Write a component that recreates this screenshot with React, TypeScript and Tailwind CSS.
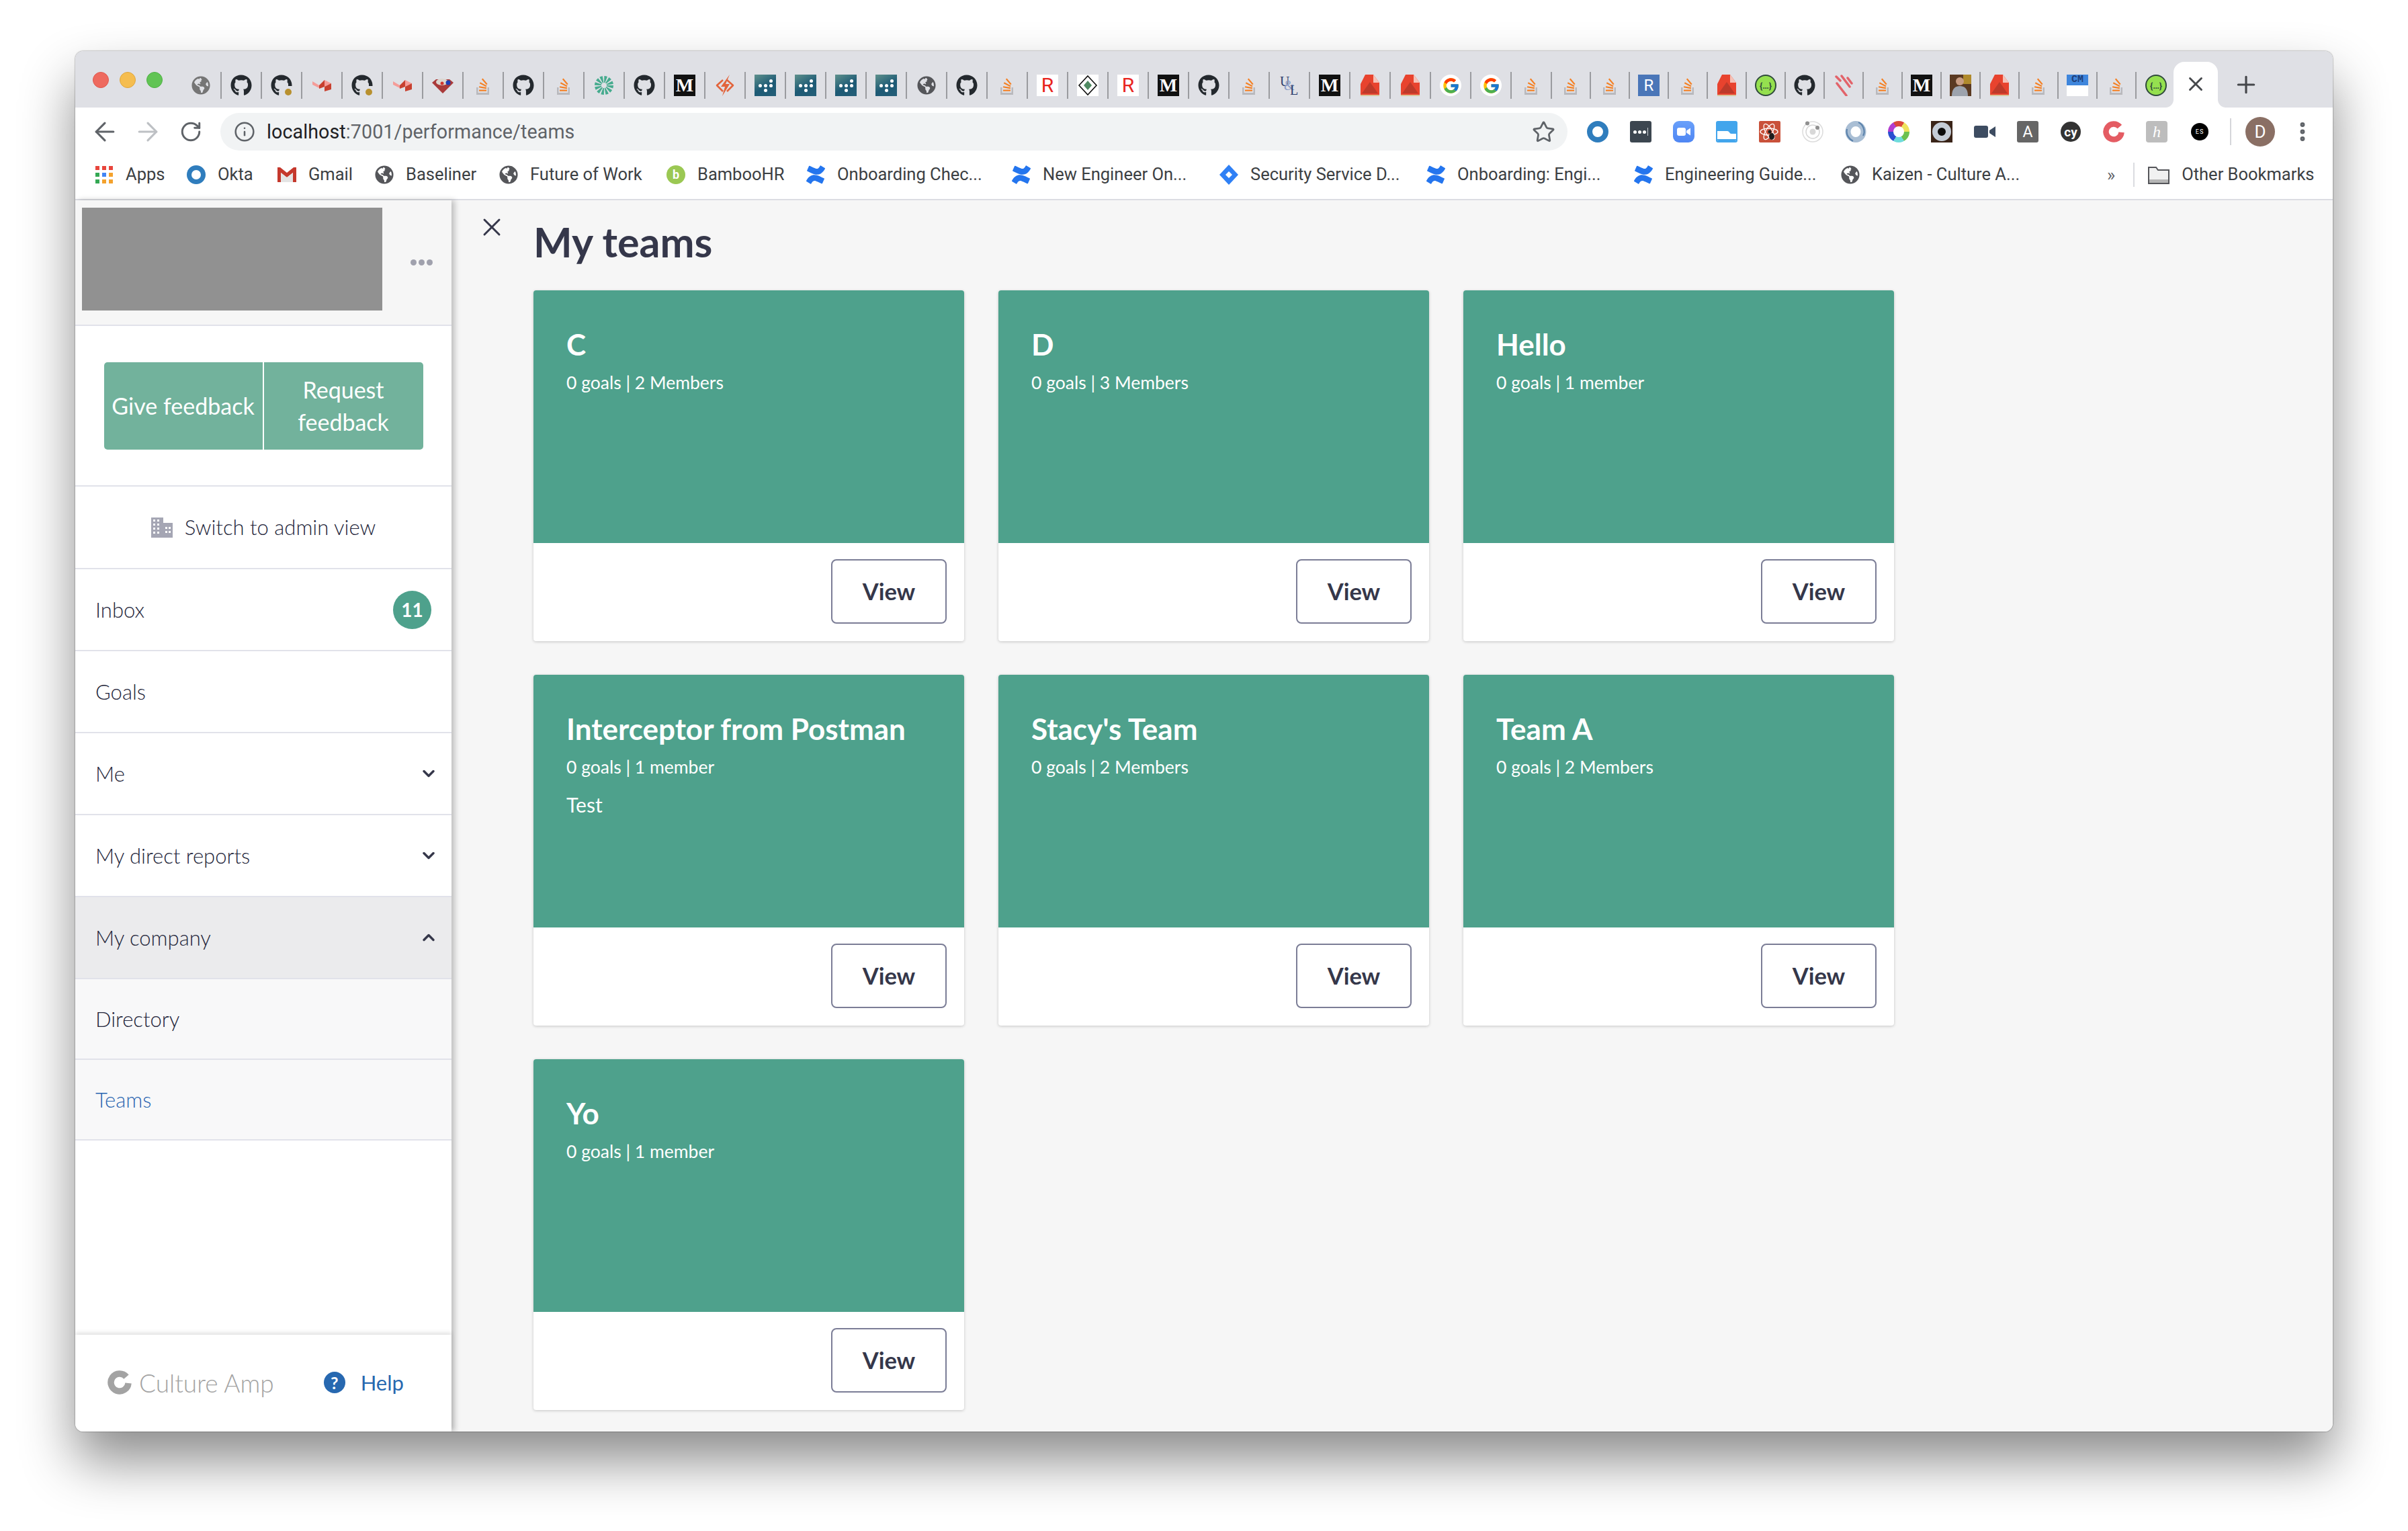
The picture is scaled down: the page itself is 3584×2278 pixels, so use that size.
import React from 'react';
import { ArrowLeft, ArrowRight, RotateCw, Info, Star, Plus, X, ChevronDown, ChevronUp, MoreVertical } from 'lucide-react';
import { FaGithub, FaGlobeAmericas } from 'react-icons/fa';
import { FcGoogle } from 'react-icons/fc';
import { SiConfluence } from 'react-icons/si';

const Globe = ({ color = '#757575', size = 28 }: { color?: string; size?: number }) => <FaGlobeAmericas size={size} color={color} />;

const Octo = ({ dot = false }: { dot?: boolean }) => (
  <span className="relative flex h-8 w-8 items-center justify-center">
    <FaGithub size={32} color="#24292e" />
    {dot && <span className="absolute bottom-0 right-0 h-[15px] w-[13px] bg-[#dfe0e5]" />}
    {dot && <span className="absolute bottom-[1px] right-[1px] h-[10px] w-[10px] rounded-full bg-[#b8902f]" />}
  </span>
);

const StackO = () => (
  <svg width="22" height="28" viewBox="0 0 22 28">
    <path d="M1 17h2.5v8h14v-8H20v11H1z" fill="#b9b9bd" />
    <g fill="#f48024">
      <rect x="5" y="20.5" width="11" height="2.2" />
      <rect x="5" y="16" width="11" height="2.2" transform="rotate(10 10 17)" />
      <rect x="6" y="11.5" width="11" height="2.2" transform="rotate(28 11 12)" />
      <rect x="8" y="7" width="11" height="2.2" transform="rotate(50 13 8)" />
    </g>
  </svg>
);

const RedCubes = () => (
  <svg width="28" height="18" viewBox="0 0 28 18">
    <path d="M0 3l10 6v4L0 8z" fill="#f59c98" />
    <path d="M10 9l8-8v10l-8 3z" fill="#c8402f" />
    <path d="M18 1l10 5-10 5z" fill="#f59c98" />
    <path d="M28 6v9l-10 3v-7z" fill="#c8402f" />
  </svg>
);

const Gem = () => (
  <svg width="32" height="24" viewBox="0 0 32 24">
    <path d="M0 8l6-5h20l6 5-16 16z" fill="#a93a3a" />
    <ellipse cx="15" cy="7" rx="9" ry="5" fill="#dcd6cf" />
    <circle cx="24" cy="8" r="3.5" fill="#1f3fb5" />
    <circle cx="15" cy="9" r="2.5" fill="#d0352c" />
  </svg>
);

const Medium = () => (
  <span className="flex h-8 w-8 items-center justify-center bg-[#111] font-['Liberation_Serif',serif] text-[28px] font-bold leading-none text-white">M</span>
);

const Burst = () => (
  <svg width="28" height="28" viewBox="0 0 28 28" fill="none">
    <circle cx="14" cy="14" r="9" stroke="#46ab8e" strokeWidth="10" strokeDasharray="3 1.71" />
  </svg>
);

const Zap = () => (
  <svg width="30" height="32" viewBox="0 0 30 32" fill="none">
    <path d="M12 8l-9 8 9 9M18 8l9 8-9 9" stroke="#e2643c" strokeWidth="2.6" strokeLinejoin="round" />
    <path d="M22 0L9 18h6l-4 14 11-18h-6z" fill="#e2643c" />
  </svg>
);

const Dots = () => (
  <span className="grid h-8 w-8 grid-cols-3 content-center justify-items-center gap-y-[2px] bg-[linear-gradient(150deg,#5f918c,#1d5a75_55%,#255f78)] px-[4px]">
    <i /><i /><i className="h-[5px] w-[5px] rounded-full bg-white" />
    <i className="h-[5px] w-[5px] rounded-full bg-white" /><i className="h-[5px] w-[5px] rounded-full bg-white" /><i className="h-[5px] w-[5px] rounded-full bg-white" />
    <i /><i className="h-[5px] w-[5px] rounded-full bg-white" /><i />
  </span>
);

const LetterR = () => (
  <span className="flex h-8 w-8 items-center justify-center bg-white font-['Roboto',sans-serif] text-[30px] leading-none text-[#e8251f]">R</span>
);

const Rhomb = () => (
  <svg width="32" height="32" viewBox="0 0 32 32">
    <rect width="32" height="32" fill="#fff" />
    <path d="M16 2l13 14-13 14L3 16z" fill="#fff" stroke="#111" strokeWidth="1.6" />
    <path d="M16 9l6 7-6 7-6-7z" fill="#4f8a62" />
  </svg>
);

const UL = () => (
  <span className="relative h-8 w-8 font-['Liberation_Serif',serif] text-[20px] leading-none text-[#2c3e6b]">
    <span className="absolute left-[2px] top-0">U</span>
    <span className="absolute left-[8px] top-[6px] text-[#8b9cc8]">&amp;</span>
    <span className="absolute left-[17px] top-[13px]">L</span>
  </span>
);

const RedDoc = () => (
  <svg width="30" height="32" viewBox="0 0 30 32">
    <path d="M8 0h12l9 12v18H1V14z" fill="#e8432e" />
    <path d="M20 0l9 12h-9z" fill="#f6c1b6" />
    <path d="M3 28l12-17 12 17z" fill="#bd3a2a" />
    <rect x="1" y="30" width="28" height="2" fill="#d9c49a" />
  </svg>
);

const GoogleG = () => (
  <span className="flex h-8 w-8 items-center justify-center rounded-full bg-white"><FcGoogle size={27} /></span>
);

const BlueR = () => (
  <span className="flex h-8 w-8 items-center justify-center bg-[#4a76b8] font-['Roboto',sans-serif] text-[24px] leading-none text-white">R</span>
);

const Swagger = () => (
  <span className="flex h-8 w-8 items-center justify-center rounded-full border-2 border-[#2f4a3c] bg-[#95e04f] font-['Roboto',sans-serif] text-[13px] font-bold leading-none text-[#2f4a3c]">{'{…}'}</span>
);

const Stripes = () => (
  <svg width="28" height="32" viewBox="0 0 28 32" stroke="#e2636a" strokeWidth="3.5" strokeLinecap="round">
    <path d="M3 3l6 6M11 2l12 16M4 13l14 18M20 5l6 8" />
  </svg>
);

const Photo = () => (
  <svg width="32" height="32" viewBox="0 0 32 32">
    <rect width="32" height="32" fill="#5b3a22" />
    <rect x="20" width="12" height="14" fill="#b08a2c" />
    <circle cx="15" cy="10" r="6" fill="#c99d83" />
    <path d="M3 32c0-12 6-15 12-15s12 3 12 15z" fill="#9da3ad" />
  </svg>
);

const CM = () => (
  <span className="flex h-8 w-8 flex-col bg-white">
    <span className="h-[16px] bg-[#3f86dc] text-center font-['Liberation_Mono',monospace] text-[15px] font-bold leading-[16px] text-[#1f3f7a]">CM</span>
  </span>
);

// brush ring shared by the Culture Amp logo and its extension icon
const BrushRing = ({ color, size }: { color: string; size: number }) => (
  <svg width={size} height={size} viewBox="0 0 36 36" fill="none">
    <path d="M28 9.6A13 13 0 1 0 31 19" stroke={color} strokeWidth="9.5" />
    <path d="M33 21c-2 6-6 9-11 10M33 24c-2 4-4 6-8 8" stroke={color} strokeWidth="1" />
  </svg>
);

// favicons in tab order, left to right
const tabs: React.ReactNode[] = [
  <Globe />, <Octo />, <Octo dot />, <RedCubes />, <Octo dot />, <RedCubes />, <Gem />, <StackO />, <Octo />, <StackO />,
  <Burst />, <Octo />, <Medium />, <Zap />, <Dots />, <Dots />, <Dots />, <Dots />, <Globe color="#55565a" />, <Octo />,
  <StackO />, <LetterR />, <Rhomb />, <LetterR />, <Medium />, <Octo />, <StackO />, <UL />, <Medium />, <RedDoc />,
  <RedDoc />, <GoogleG />, <GoogleG />, <StackO />, <StackO />, <StackO />, <BlueR />, <StackO />, <RedDoc />, <Swagger />,
  <Octo />, <Stripes />, <StackO />, <Medium />, <Photo />, <RedDoc />, <StackO />, <CM />, <StackO />, <Swagger />,
];

const TabBar = () => (
  <div className="flex h-[84px] bg-[#dfe0e5]">
    <div className="ml-[26px] mt-[31px] flex h-6 w-[132px] gap-4">
      <span className="h-6 w-6 rounded-full border border-[#e0584f] bg-[#ee6a5f]" />
      <span className="h-6 w-6 rounded-full border border-[#dfa63c] bg-[#f5bd4f]" />
      <span className="h-6 w-6 rounded-full border border-[#4eb044] bg-[#61c454]" />
    </div>
    <div className="mt-[31px] flex h-10">
      {tabs.map((icon, i) => (
        <div
          key={i}
          className={`flex h-10 shrink-0 items-center justify-center ${i < 34 ? 'w-[60px]' : 'w-[58px]'} ${i < 49 ? 'border-r-2 border-[#9a9b9f]' : ''}`}
        >
          {icon}
        </div>
      ))}
    </div>
    <div className="relative ml-[-3px] mt-4 flex h-[68px] w-[66px] items-start justify-center rounded-t-[16px] bg-white pt-4">
      <span className="absolute bottom-0 left-[-12px] h-3 w-3 bg-[radial-gradient(circle_at_0_0,transparent_11.5px,#ffffff_12.5px)]" />
      <span className="absolute bottom-0 right-[-12px] h-3 w-3 bg-[radial-gradient(circle_at_100%_0,transparent_11.5px,#ffffff_12.5px)]" />
      <X size={34} color="#45474b" strokeWidth={2} />
    </div>
    <div className="ml-[22px] mt-[30px]">
      <Plus size={40} color="#45474b" strokeWidth={1.9} />
    </div>
  </div>
);

// toolbar extension icons
const extensions: React.ReactNode[] = [
  <span className="h-8 w-8 rounded-full border-[8px] border-[#2f7dbd]" />,
  <span className="flex h-8 w-8 items-center justify-center gap-[2px] rounded-[3px] bg-[#3c4650]">
    <i className="h-[5px] w-[5px] rounded-full bg-white" />
    <i className="h-[5px] w-[5px] rounded-full bg-white" />
    <i className="h-[5px] w-[5px] rounded-full bg-white" />
    <i className="h-[12px] w-[1px] bg-[#c8cdd2]" />
  </span>,
  <span className="flex h-8 w-8 items-center justify-center rounded-[9px] bg-[linear-gradient(#69a0fa,#4f86f3)]">
    <svg width="20" height="12" viewBox="0 0 20 12" fill="#fff"><rect width="13" height="12" rx="3" /><path d="M14 4.5l6-4v11l-6-4z" /></svg>
  </span>,
  <svg width="32" height="32" viewBox="0 0 32 32"><rect width="32" height="32" rx="3" fill="#42a5ec" /><path d="M2 15h15c3 0 3 4 6 4h7v9a2 2 0 01-2 2H4a2 2 0 01-2-2z" fill="#fff" /><path d="M2 27h28v1a2 2 0 01-2 2H4a2 2 0 01-2-2z" fill="#42a5ec" /></svg>,
  <svg width="32" height="32" viewBox="0 0 32 32" fill="none"><rect width="32" height="32" rx="2" fill="#c9513a" /><g stroke="#fff" strokeWidth="1.3"><ellipse cx="15" cy="16" rx="13" ry="5" /><ellipse cx="15" cy="16" rx="13" ry="5" transform="rotate(60 15 16)" /><ellipse cx="15" cy="16" rx="13" ry="5" transform="rotate(120 15 16)" /></g><circle cx="16" cy="16" r="2.5" fill="#1d1d1d" /><ellipse cx="19" cy="23" rx="4" ry="5" fill="#1d1d1d" /></svg>,
  <svg width="32" height="32" viewBox="0 0 32 32" fill="none"><circle cx="16" cy="16" r="15" stroke="#dcdcdc" strokeWidth="1.5" /><circle cx="16" cy="16" r="10" stroke="#d6d6d6" strokeWidth="1.5" /><circle cx="16" cy="16" r="4.5" fill="#d8d8d8" /><circle cx="8" cy="3.5" r="3" fill="#8f8f8f" /><circle cx="23" cy="10" r="3" fill="#8f8f8f" /></svg>,
  <svg width="32" height="32" viewBox="0 0 32 32" fill="none"><ellipse cx="16" cy="16" rx="11.5" ry="12" stroke="#a9bed4" strokeWidth="8" /><path d="M20 2c7 3 11 13 7 20M12 30C6 27 1 20 3 12" stroke="#5d84ad" strokeWidth="2.2" /></svg>,
  <span className="h-8 w-8 rounded-full bg-[conic-gradient(from_-30deg,#d9483b_0_60deg,#efe25d_60deg_120deg,#6cc04f_120deg_180deg,#6fdcdc_180deg_240deg,#2a4fd0_240deg_300deg,#b23ccf_300deg_360deg)] p-2"><span className="block h-full w-full rounded-full bg-white" /></span>,
  <span className="flex h-8 w-8 items-center justify-center bg-[#3a2418]"><span className="h-[28px] w-[28px] rounded-full border-[8px] border-[#c4ccd6] bg-[#0c0c0c]" /></span>,
  <svg width="32" height="20" viewBox="0 0 32 20" fill="#3d4c61"><rect width="21" height="18" y="1" rx="3" /><path d="M23 8l9-6v16l-9-6z" /></svg>,
  <span className="flex h-8 w-8 items-center justify-center rounded-[3px] bg-[#666] font-['Roboto',sans-serif] text-[23px] leading-none text-white">A</span>,
  <span className="flex h-[30px] w-[30px] items-center justify-center rounded-full bg-[#333] font-['Roboto',sans-serif] text-[19px] font-bold leading-none text-white">cy</span>,
  <BrushRing color="#e45c63" size={32} />,
  <span className="flex h-8 w-8 items-center justify-center rounded-[4px] bg-[#bdbdbd] font-['Liberation_Serif',serif] text-[24px] italic leading-none text-white">h</span>,
  <span className="flex h-[26px] w-[26px] items-center justify-center rounded-full bg-black font-['Roboto',sans-serif] text-[9px] leading-none tracking-[1px] text-white">ES</span>,
];

const Toolbar = () => (
  <div className="flex h-[76px] items-start bg-white pt-2">
    <div className="flex h-14 w-[216px] shrink-0 items-center pl-3">
      <span className="flex w-16 justify-center"><ArrowLeft size={44} color="#5f6368" strokeWidth={1.7} /></span>
      <span className="flex w-16 justify-center"><ArrowRight size={44} color="#bdc0c4" strokeWidth={1.7} /></span>
      <span className="flex w-16 justify-center"><RotateCw size={34} color="#5f6368" strokeWidth={2.1} /></span>
    </div>
    <div className="flex h-14 w-[2005px] shrink-0 items-center rounded-full bg-[#f1f3f4] pl-5 pr-[18px]">
      <Info size={32} color="#5f6368" strokeWidth={1.9} />
      <span className="ml-[17px] flex-1 font-['Roboto',sans-serif] text-[28.6px] leading-none tracking-[0.1px] text-[#5f6368]">
        <span className="text-[#202124]">localhost</span>:7001/performance/teams
      </span>
      <Star size={35} color="#5f6368" strokeWidth={1.9} />
    </div>
    <div className="ml-[13px] flex h-14 items-center">
      {extensions.map((icon, i) => (
        <div key={i} className="flex w-[64px] shrink-0 items-center justify-center">{icon}</div>
      ))}
      <span className="ml-[13px] h-10 w-[2px] bg-[#d5d6da]" />
      <span className="ml-[21px] flex h-11 w-11 items-center justify-center rounded-full bg-[#8a6f64] font-['Roboto',sans-serif] text-[26px] leading-none text-white">D</span>
      <span className="ml-[23px]"><MoreVertical size={36} color="#5f6368" strokeWidth={2.6} /></span>
    </div>
  </div>
);

const AppsGrid = () => {
  const colors = ['#e8453c', '#e8453c', '#e8453c', '#34a853', '#4285f4', '#f4a22d', '#34a853', '#f4a22d', '#f4a22d'];
  return (
    <span className="grid h-[26px] w-[26px] shrink-0 grid-cols-3 gap-[4px]">
      {colors.map((c, i) => <span key={i} className="h-[6px] w-[6px]" style={{ backgroundColor: c }} />)}
    </span>
  );
};

const Gmail = () => (
  <svg width="28" height="22" viewBox="0 0 28 22">
    <path d="M0 0h4l10 8 10-8h4v22h-5V8l-9 7-9-7v14H0z" fill="#c5382c" />
    <path d="M5 8l9 7 9-7v14H5z" fill="#e4e4e4" />
  </svg>
);

const Bamboo = () => (
  <span className="flex h-7 w-7 items-center justify-center rounded-full bg-[#9bc853] font-['Roboto',sans-serif] text-[18px] font-bold leading-none text-white">b</span>
);

const Conf = () => <SiConfluence size={30} color="#2475ee" />;

const JiraDiamond = () => (
  <svg width="28" height="30" viewBox="0 0 28 30">
    <path d="M14 0l14 15-14 15L0 15z" fill="#2f80f5" />
    <path d="M14 10l5 5-5 5-5-5z" fill="#fff" />
  </svg>
);

const bookmarks: { label: string; icon: React.ReactNode; width: string }[] = [
  { label: 'Apps', icon: <AppsGrid />, width: 'w-[137px]' },
  { label: 'Okta', icon: <span className="h-7 w-7 shrink-0 rounded-full border-[7px] border-[#2f7dbd]" />, width: 'w-[135px]' },
  { label: 'Gmail', icon: <Gmail />, width: 'w-[145px]' },
  { label: 'Baseliner', icon: <Globe color="#55565a" />, width: 'w-[185px]' },
  { label: 'Future of Work', icon: <Globe color="#55565a" />, width: 'w-[249px]' },
  { label: 'BambooHR', icon: <Bamboo />, width: 'w-[208px]' },
  { label: 'Onboarding Chec...', icon: <Conf />, width: 'w-[306px]' },
  { label: 'New Engineer On...', icon: <Conf />, width: 'w-[309px]' },
  { label: 'Security Service D...', icon: <JiraDiamond />, width: 'w-[308px]' },
  { label: 'Onboarding: Engi...', icon: <Conf />, width: 'w-[309px]' },
  { label: 'Engineering Guide...', icon: <Conf />, width: 'w-[308px]' },
  { label: 'Kaizen - Culture A...', icon: <Globe color="#55565a" />, width: 'w-[396px]' },
];

const BookmarksBar = () => (
  <div className="flex h-[62px] items-center border-b-2 border-[#dcdde3] bg-white pb-3 pl-[29px] font-['Roboto',sans-serif] text-[25.5px] leading-none text-[#3c4043]">
    {bookmarks.map((b) => (
      <div key={b.label} className={`flex shrink-0 items-center ${b.width}`}>
        <span className="flex w-7 shrink-0 items-center justify-center">{b.icon}</span>
        <span className="ml-[18px] whitespace-nowrap">{b.label}</span>
      </div>
    ))}
    <span className="text-[26px] text-[#5f6368]">»</span>
    <span className="ml-[27px] h-[36px] w-[2px] bg-[#dadce0]" />
    <svg className="ml-5" width="32" height="28" viewBox="0 0 32 28">
      <path d="M1 3h11l3 4h16v20H1z" fill="#f1f1f1" stroke="#55565a" strokeWidth="2" />
      <rect x="2" y="21" width="28" height="5" fill="#b5b5b5" />
    </svg>
    <span className="ml-[18px] whitespace-nowrap">Other Bookmarks</span>
  </div>
);

const BuildingIcon = () => (
  <svg width="32" height="30" viewBox="0 0 32 30" fill="#a5a6b4">
    <path fillRule="evenodd" d="M0 0h18v8h14v22H0zM3 3v3h3V3zm6 0v3h3V3zM3 9v3h3V9zm6 0v3h3V9zm-6 6v3h3v-3zm6 0v3h3v-3zm-6 6v3h3v-3zm6 0v3h3v-3zm12-7v3h3v-3zm5 0v3h3v-3zm-5 6v3h3v-3zm5 0v3h3v-3z" />
  </svg>
);

const NavRow = ({ label, badge, chevron, active }: { label: string; badge?: string; chevron?: 'up' | 'down'; active?: boolean }) => (
  <div className={`flex h-[122px] shrink-0 items-center justify-between border-b-2 border-[#e1e2ea] pl-[30px] pr-5 text-[#23253a] ${active ? 'bg-[#ebebed]' : 'bg-white'}`}>
    <span>{label}</span>
    {badge && (
      <span className="mr-[10px] flex h-[57px] w-[57px] items-center justify-center rounded-full bg-[#4ea18c] text-[28px] font-bold leading-none text-white">{badge}</span>
    )}
    {chevron === 'down' && <ChevronDown size={28} color="#35374a" strokeWidth={3} />}
    {chevron === 'up' && <ChevronUp size={28} color="#35374a" strokeWidth={3} />}
  </div>
);

const Sidebar = () => (
  <aside className="relative z-10 flex w-[560px] shrink-0 flex-col bg-white font-['Lato',sans-serif] text-[31px] font-light shadow-[5px_0_8px_rgba(0,0,0,0.22)]">
    <div className="flex h-[187px] shrink-0 items-center border-b-2 border-[#e1e2ea] bg-[#f6f6f6] pl-[10px]">
      <div className="mb-[10px] h-[153px] w-[447px] bg-[#919191]" />
      <div className="ml-[42px] flex gap-[3px]">
        <span className="h-[9px] w-[9px] rounded-full bg-[#a0a1ad]" />
        <span className="h-[9px] w-[9px] rounded-full bg-[#a0a1ad]" />
        <span className="h-[9px] w-[9px] rounded-full bg-[#a0a1ad]" />
      </div>
    </div>
    <div className="flex h-[239px] shrink-0 items-center justify-center border-b-2 border-[#e1e2ea]">
      <div className="flex h-[130px] w-[475px] overflow-hidden rounded-[5px] bg-[#72b29c] text-center text-[34px] font-normal leading-[48px] text-white">
        <div className="flex w-[238px] items-center justify-center border-r-2 border-white">Give feedback</div>
        <div className="flex flex-1 items-center justify-center px-10">Request feedback</div>
      </div>
    </div>
    <div className="flex h-[123px] shrink-0 items-center justify-center gap-[18px] border-b-2 border-[#e1e2ea] text-[#23253a]">
      <BuildingIcon />
      <span>Switch to admin view</span>
    </div>
    <NavRow label="Inbox" badge="11" />
    <NavRow label="Goals" />
    <NavRow label="Me" chevron="down" />
    <NavRow label="My direct reports" chevron="down" />
    <NavRow label="My company" chevron="up" active />
    <div className="flex h-[120px] shrink-0 items-center border-b-2 border-[#e1e2ea] bg-[#f8f8f9] pl-[30px] text-[#23253a]">Directory</div>
    <div className="flex h-[120px] shrink-0 items-center border-b-2 border-[#e1e2ea] bg-[#f8f8f9] pl-[30px] text-[#2b66b1]">Teams</div>
    <div className="flex-1" />
    <div className="flex h-[144px] shrink-0 items-center pb-[2px] pl-[48px] shadow-[0_-3px_6px_rgba(0,0,0,0.12)]">
      <BrushRing color="#a3a3a3" size={36} />
      <span className="ml-[11px] whitespace-nowrap text-[37px] leading-none text-[#a3a3a3]">Culture Amp</span>
      <span className="ml-[74px] flex h-8 w-8 items-center justify-center rounded-full bg-[#2768b0] text-[25px] font-bold leading-none text-white">?</span>
      <span className="ml-[23px] font-normal text-[#2768b0]">Help</span>
    </div>
  </aside>
);

const teams = [
  { name: 'C', meta: '0 goals | 2 Members' },
  { name: 'D', meta: '0 goals | 3 Members' },
  { name: 'Hello', meta: '0 goals | 1 member' },
  { name: 'Interceptor from Postman', meta: '0 goals | 1 member', description: 'Test' },
  { name: "Stacy's Team", meta: '0 goals | 2 Members' },
  { name: 'Team A', meta: '0 goals | 2 Members' },
  { name: 'Yo', meta: '0 goals | 1 member' },
];

const TeamCard = ({ name, meta, description }: { name: string; meta: string; description?: string }) => (
  <div className="flex h-[522px] flex-col overflow-hidden rounded-[4px] bg-white shadow-[0_1px_4px_rgba(0,0,0,0.2)]">
    <div className="h-[376px] bg-[#4ea18c] px-[49px] pt-[52px] text-white">
      <div className="text-[44px] font-bold leading-[56px]">{name}</div>
      <div className="mt-[13px] text-[26.5px] font-normal leading-[32px]">{meta}</div>
      {description && <div className="mt-[24px] text-[30px] font-normal leading-[32px]">{description}</div>}
    </div>
    <div className="flex flex-1 items-start justify-end pr-[26px] pt-[24px]">
      <button className="h-[96px] w-[172px] rounded-[8px] border-2 border-[#7b7d96] bg-white text-[34.5px] font-bold text-[#35374a]">View</button>
    </div>
  </div>
);

export default function App() {
  return (
    <div className="h-[2278px] w-[3584px] overflow-hidden bg-white pl-[112px] pt-[76px]">
      <div className="flex h-[2054px] w-[3360px] flex-col overflow-hidden rounded-[12px] shadow-[0_44px_80px_rgba(0,0,0,0.45),0_0_2px_rgba(0,0,0,0.6)]">
        <TabBar />
        <Toolbar />
        <BookmarksBar />
        <div className="flex min-h-0 flex-1 bg-[#f6f6f6]">
          <Sidebar />
          <main className="flex flex-1 pl-[38px] font-['Lato',sans-serif]">
            <div className="pt-[18px]"><X size={44} color="#35374a" strokeWidth={1.6} /></div>
            <div className="ml-10 pt-[22px]">
              <h1 className="mb-[32px] h-[80px] text-[61px] font-bold leading-[80px] text-[#35374a]">My teams</h1>
              <div className="grid grid-cols-[repeat(3,641px)] gap-x-[51px] gap-y-[50px]">
                {teams.map((t) => <TeamCard key={t.name} {...t} />)}
              </div>
            </div>
          </main>
        </div>
      </div>
    </div>
  );
}
